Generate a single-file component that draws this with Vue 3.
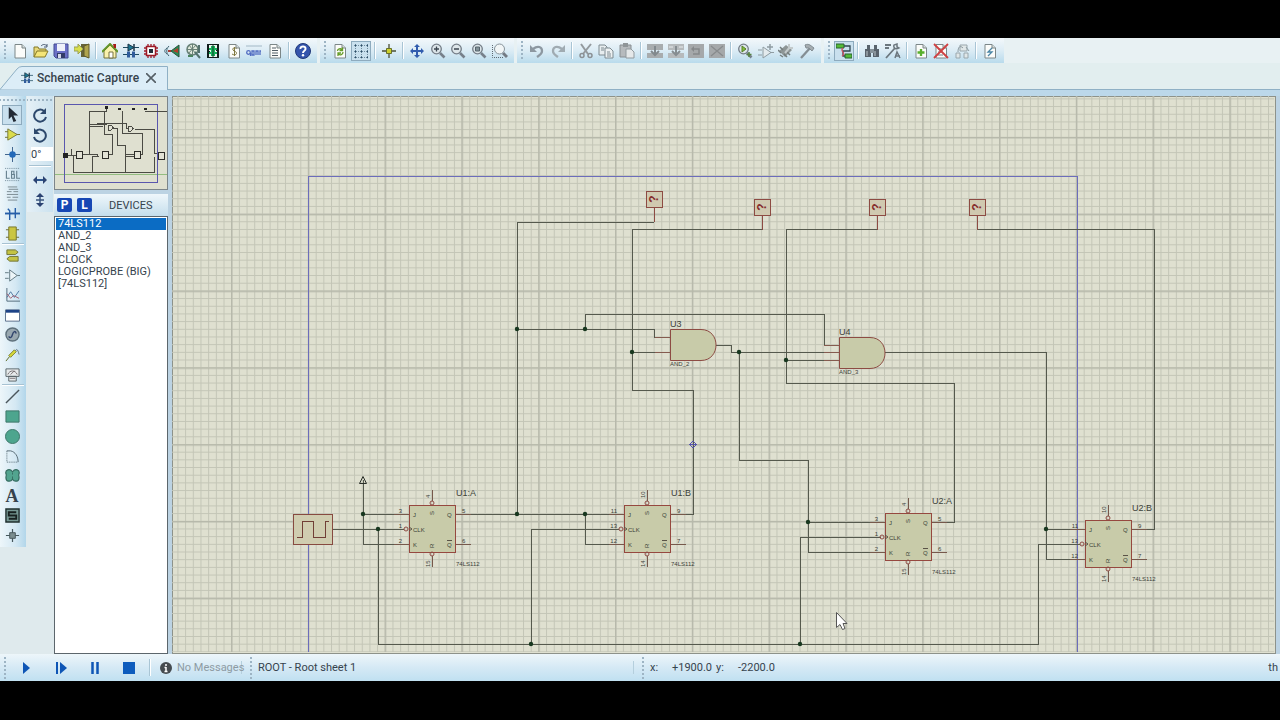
<script setup>
import { ref } from "vue";

const selected = ref("74LS112")
const angle = ref("0°")
const devices = ["74LS112", "AND_2", "AND_3", "CLOCK", "LOGICPROBE (BIG)", "[74LS112]"]

// toolbar groups, each one split in sections by a separator
const toolbars = [
    [["new", "open", "save", "exit"], ["home", "schematic", "chip", "view3d", "gerber", "explorer", "bill", "code", "notes"], ["help"]],
    [["redraw", "grid"], ["origin"], ["pan", "zoomIn", "zoomOut", "zoomAll", "zoomArea"]],
    [["undo", "redo"], ["cut", "copy", "paste"], ["blockCopy", "blockMove", "blockRotate", "blockDelete"], ["pick", "make", "packaging", "decompose"]],
    [["autoroute"], ["search", "property"], ["newSheet", "removeSheet", "exitSheet"], ["erc"]]
]
const pressed = ["grid", "autoroute", "select"]

const modes = [
    ["select", "component", "junction", "label", "script", "bus", "subcircuit"],
    ["terminal", "pin", "graph", "window", "generator", "probe", "instrument"],
    ["line", "box", "circle", "arc", "path", "text", "symbol", "marker"]
]

const page = '<path d="M3 1.500h7l3.500 3.500v10H3z" fill="#fbfcfa" stroke="#7c8788"/><path d="M10 1.500v3.500h3.500" fill="#d5dcdb" stroke="#7c8788"/>'
const lens = '<path d="M10 10l4.500 4.500" stroke="#77808b" stroke-width="2.600"/><circle cx="6.500" cy="6" r="4.800" fill="#dde6ea" stroke="#747d87" stroke-width="1.300"/>'
const parts = '<path d="M0 4.500h16M0 11.500h16" stroke="#1e4a60"/><path d="M5 1v7l6-3.500z" fill="#1c7894" stroke="#1b3547"/><path d="M11 1v7" stroke="#1b3547" stroke-width="1.500"/><path d="M4 8.500h3v6H4zM9 8.500h3v6H9z" fill="#305c9c"/>'
const greyBlock = '<path d="M0 1h16v14H0z" fill="#a5a8aa"/>'

const icons = {
    new: page,
    open: '<path d="M1 14V4h4l1 2h7v3" fill="#e7d87a" stroke="#847827"/><path d="M1 14l3-6h11l-3 6z" fill="#f4e578" stroke="#847827"/><path d="M8 3c2-2 4-2 6 0m0-2v3h-3" fill="none" stroke="#4a5b72"/>',
    save: '<path d="M1 1h14v14H3l-2-2z" fill="#6b70c6" stroke="#424b91"/><path d="M4 1h8v7H4z" fill="#eef1fa"/><path d="M4 10h8v5H4z" fill="#333c68"/><path d="M5 11h3v4H5z" fill="#d4d8e9"/>',
    exit: '<path d="M7 1h8v13H7z" fill="#65633a"/><path d="M10 3l5-2v14l-5-2z" fill="#afa44e" stroke="#5f592a"/><path d="M0 4h4V1l5 5-5 5V8H0z" fill="#d8df4c" stroke="#9aa054"/>',
    home: '<path d="M2 8v7h12V8L8 2z" fill="#faf2ad" stroke="#73713a"/><path d="M0 9l8-8 8 8" fill="none" stroke="#65952b" stroke-width="2"/><path d="M11 1h3v4h-2z" fill="#a61c19"/><path d="M7 9h4v6H7z" fill="#fff" stroke="#777341"/>',
    schematic: parts,
    chip: '<path d="M5 1v14M8 1v14M11 1v14M1 5h14M1 8h14M1 11h14" stroke="#a01c2b" stroke-width="1.300"/><path d="M3.500 3.500h9v9h-9z" fill="#fff" stroke="#9d1a26" stroke-width="1.500"/><path d="M6 6h4v4H6z" fill="#222c38"/>',
    view3d: '<path d="M15 2v12L7 8z" fill="#2b8d57" stroke="#29503a"/><path d="M14 5v5l-5-2z" fill="#b53b2a"/><path d="M5 3C2 6 2 10 5 13M3 5C0 7 0 9 3 11" fill="none" stroke="#3d6270"/><path d="M4 8h3" stroke="#a93b34" stroke-width="2"/>',
    gerber: '<circle cx="7.500" cy="6.500" r="5.500" fill="#e2ebdf" stroke="#678177" stroke-width="1.500"/><path d="M2 6.500h11M7.500 1v11M4 2l7 9M11 2L3 11" stroke="#6a8278"/><path d="M10 9l5 6M14 2v8" stroke="#52716d" stroke-width="2"/><path d="M3 13h5" stroke="#49835d" stroke-width="2"/>',
    explorer: '<path d="M2 1h12v14H2z" fill="#111e1c"/><path d="M4 2h8v4h-1v2h1v6H4v-3h1V8H4z" fill="#eaf5ee"/><path d="M6 3h4v2h2v2h-2v2h2v2h-2v2H6v-2H4V9h2V7H4V5h2z" fill="#16b25c"/><path d="M8 2v12" stroke="#113e28"/>',
    bill: page + '<path d="M10.500 5.500C8 4 6 5.500 7 7s4 1.500 3.500 3.500-3 1.500-4.500.500M8.500 4v9" fill="none" stroke="#817a42"/>',
    code: '<path d="M0 3h16" stroke="#a3b8c6"/><circle cx="2.500" cy="9.500" r="1.800" fill="none" stroke="#526dc2" stroke-width="1.300"/><path d="M4.500 10v3M6 8h2v4H6zM10 12V8h2v4M14 12V8h1" fill="none" stroke="#526dc2" stroke-width="1.300"/>',
    notes: page + '<path d="M5 5h4M5 7.500h6M5 10h6M5 12.500h6" stroke="#525e66"/>',
    help: '<circle cx="8" cy="8" r="7.500" fill="#3354ac" stroke="#203878"/><path d="M5.500 6C5 2.500 11 2.500 10.500 6 10.500 8 8 7.500 8 10" fill="none" stroke="#fff" stroke-width="2"/><circle cx="8" cy="12.300" r="1.200" fill="#fff"/>',
    redraw: page + '<path d="M5.500 8c0-2 3-3 4.500-1.500M10.500 4.500v3h-3M11 9c0 3-3 3.500-4.500 2M6 13v-3h3" fill="none" stroke="#669c28" stroke-width="1.300"/>',
    grid: '<path d="M1 2.500h14M1 8.500h14M1 14.500h14M2.500 1v14M8.500 1v14M14.500 1v14" stroke="#6f8b9d" stroke-dasharray="1 1"/><path d="M2 2.500h1m5 0h1m5 0h1M2 8.500h1m5 0h1m5 0h1M2 14.500h1m5 0h1m5 0h1" stroke="#2a4c68" stroke-width="1.500"/>',
    origin: '<path d="M8 1v14M1 8h14" stroke="#4c5136" stroke-width="1.300"/><path d="M5.500 5.500h5v5h-5z" fill="#ccd12c" stroke="#68702b"/>',
    pan: '<path d="M8 3v10M3 8h10" stroke="#315cae" stroke-width="2"/><path d="M8 1l3 3H5zM8 15l3-3H5zM1 8l3-3v6zM15 8l-3-3v6z" fill="#315cae"/>',
    zoomIn: lens + '<path d="M4 6h5M6.500 3.500v5" stroke="#3b4650" stroke-width="1.300"/>',
    zoomOut: lens + '<path d="M4 6h5" stroke="#3b4650" stroke-width="1.500"/>',
    zoomAll: lens + '<path d="M4.500 4h4v4h-4z" fill="#839299" stroke="#56646d"/>',
    zoomArea: '<path d="M.500 2v12.500H12" fill="none" stroke="#5e6971" stroke-dasharray="1 1"/><path d="M11 10l4 4" stroke="#737a83" stroke-width="3"/><circle cx="7.500" cy="6" r="5" fill="#f1f5f6" stroke="#88949b"/>',
    undo: '<path d="M4 6c5-4 9-2 9 2 0 3-2 4-5 6" fill="none" stroke="#8d98a1" stroke-width="2.300"/><path d="M1 2v7h7z" fill="#8d98a1"/>',
    redo: '<path d="M12 6C7 2 3 4 3 8c0 3 2 4 5 6" fill="none" stroke="#a0abb2" stroke-width="2.300"/><path d="M15 2v7H8z" fill="#a0abb2"/>',
    cut: '<path d="M3 1l7 10M13 1L5 11" stroke="#949a9e" stroke-width="2"/><circle cx="4" cy="12.500" r="2" fill="none" stroke="#8b9195" stroke-width="1.500"/><circle cx="12" cy="12.500" r="2" fill="none" stroke="#8b9195" stroke-width="1.500"/>',
    copy: '<path d="M1 2h6l2 2v8H1z" fill="#e7edef" stroke="#7f8b91"/><path d="M7 5h5l3 3v7H7z" fill="#edf1f2" stroke="#7f8b91"/><path d="M3 5h3M3 7h3M9 9h3M9 11h4M9 13h4" stroke="#7f8b91"/>',
    paste: '<path d="M1 2h11v12H1z" fill="#b6babd" stroke="#888e92"/><path d="M4 0h5v4H4z" fill="#8f9598"/><path d="M7 6h5l3 3v6H7z" fill="#e5e8e9" stroke="#929a9e"/>',
    blockCopy: '<path d="M0 1h16v6H0zM0 10h16v5H0z" fill="#a8acae"/><path d="M8 3v9M4 8l4 4 4-4" fill="none" stroke="#82898d" stroke-width="2"/>',
    blockMove: '<path d="M0 1h16v6H0zM0 10h16v5H0z" fill="#b6babc"/><path d="M8 3v9M4 8l4 4 4-4" fill="none" stroke="#868d91" stroke-width="2"/><path d="M1 4h4M11 4h4" stroke="#e9ecee"/>',
    blockRotate: greyBlock + '<path d="M5 6h6v5H5" fill="none" stroke="#85888a" stroke-width="1.500"/><path d="M6 3v6L3 6z" fill="#85888a"/>',
    blockDelete: greyBlock + '<path d="M2 3l12 10M14 3L2 13" stroke="#888b8d" stroke-width="1.300"/>',
    pick: lens + '<path d="M5 3v6l4-3z" fill="#85bd38" stroke="#54802b"/><path d="M12 9v5M9.500 11.500h5" stroke="#578340" stroke-width="1.500"/>',
    make: '<path d="M0 7h4M0 12h4M12 9.500h4M5 4v11l8-5.500z" fill="#e3eaed" stroke="#8f9ca2"/><path d="M12 1v6M9 4h6" stroke="#8f9ca2" stroke-width="1.500"/>',
    packaging: '<path d="M1 8l7-6 6 5-7 7z" fill="#8e9696"/><path d="M2 4l3 3M0 7l3 3M2 12l3 2M9 14l-3-3M12 12l-3-3" stroke="#757e7e" stroke-width="1.500"/><path d="M7 10l5-6M11 1v4h4" fill="none" stroke="#c3cacb" stroke-width="2"/>',
    decompose: '<path d="M2 15l9-10" stroke="#848e94" stroke-width="2.300"/><path d="M6 2c4-2 6 1 9 3l-2 3-3-3-3 0z" fill="#a5adb1" stroke="#818b91"/>',
    autoroute: '<path d="M0 1h8v4H0zM9 11h7v4H9z" fill="#56bb37" stroke="#286332"/><path d="M8 3h6v5H7v5h2" fill="none" stroke="#31454f" stroke-width="1.300"/><path d="M7 5c-4 3 4 5-1 8" fill="none" stroke="#cc5364" stroke-width="1.300"/>',
    search: '<path d="M3 2h3v4H3zM10 2h3v4h-3zM1 6h6v8H1zM9 6h6v8H9z" fill="#59636c"/><path d="M6 6h4v4H6z" fill="#87939a"/><path d="M3 8v5M11 8v5" stroke="#bcc7cb"/>',
    property: '<path d="M0 2h6M0 5h4M1 15l9-10" stroke="#6c777e" stroke-width="1.800"/><path d="M9 2c-1 3 2 5 5 3l-2-1V1zM10 15l2-6 3 6M10 13h5" fill="none" stroke="#6c777e" stroke-width="1.500"/>',
    newSheet: page + '<path d="M8 6v7M4.500 9.500h7" stroke="#58af2c" stroke-width="2.300"/>',
    removeSheet: page + '<path d="M5 6h5M5 9h5M5 12h5" stroke="#737b7e"/><path d="M1 1l14 14M15 1L1 15" stroke="#cf4143" stroke-width="1.800"/>',
    exitSheet: '<path d="M2 10h4v5H2zM10 10h4v5h-4zM6 2h7v6H6z" fill="#e0e7e8" stroke="#9aa7ac"/><path d="M4 9c0-5 2-7 5-4M12 4l3 4" fill="none" stroke="#8c9aa0"/>',
    erc: page + '<path d="M10 5L6 9h4l-4 4" fill="none" stroke="#4b86a6" stroke-width="1.300"/>',

    select: '<path d="M4 0v13l3-3 2 6 3-1-3-6h5z" fill="#222a35"/>',
    component: '<path d="M0 5h4M0 11h4M12 8h4" stroke="#6b6e2e"/><path d="M3 2v12l10-6z" fill="#dbdc4b" stroke="#75783b"/>',
    junction: '<path d="M8 0v16M0 8h16" stroke="#385d87"/><circle cx="8" cy="8" r="3.500" fill="#2369b8"/>',
    label: '<path d="M0 1.500h16M0 14.500h16" stroke="#738c9b" stroke-dasharray="1 1"/><path d="M1.500 4v8H5M7 4v8h3V8H7M7 4.500h2.500V8M12.500 4v8H16" fill="none" stroke="#67818f" stroke-width="1.200"/>',
    script: '<path d="M3 1h10M4 3.500h10M2 6h5M9 6h5M2 9h12M2 12h4M8 12h6M3 15h10" stroke="#77878e"/>',
    bus: '<path d="M0 8h16" stroke="#265ea8" stroke-width="2"/><path d="M5 15V5l-2-2M11 13V2" fill="none" stroke="#265ea8" stroke-width="1.500"/>',
    subcircuit: '<path d="M1 4h14M1 12h14" stroke="#67682e"/><path d="M4 1h8v14H4z" fill="#cac642" stroke="#75742e"/>',
    terminal: '<path d="M2 2h9l3 2.500L11 7H2zM14 9H5l-3 2.500L5 14h9z" fill="#c3c342" stroke="#6e7135"/>',
    pin: '<path d="M0 5h4M0 11h4M13 8h3M5 2v12l8-6z" fill="#edf5f8" stroke="#617781"/>',
    graph: '<path d="M2 0v14h14" fill="none" stroke="#506878"/><path d="M2 10l4-6 4 6 5-7" fill="none" stroke="#4d76a0"/><path d="M2 6l4 5 3-3 6 3" fill="none" stroke="#a45e6f"/>',
    window: '<path d="M.500 2h15v12H.500z" fill="#fff" stroke="#556b87"/><path d="M1 2h14v3H1z" fill="#1d4387"/>',
    generator: '<circle cx="8" cy="8" r="7" fill="#9aa8b0" stroke="#5e707b" stroke-width="1.500"/><path d="M4 10c1 2 3 2 4-2s3-4 4-1" fill="none" stroke="#32456d" stroke-width="1.500"/>',
    probe: '<path d="M1 15l4-5" stroke="#59651d"/><path d="M4 9l6-6 2 2-6 6z" fill="#d6d83a" stroke="#7d8132"/><path d="M11 4c2-3 3 0 4 4" fill="none" stroke="#5f7180"/>',
    instrument: '<path d="M1 2h14v8H1zM4 10h8v5H4z" fill="#e6eaeb" stroke="#596367"/><path d="M3 8c2-5 8-5 10 0M6 8l4-4M5 12h6" fill="none" stroke="#746d70"/>',
    line: '<path d="M1 15L15 1" stroke="#4b565c" stroke-width="1.500"/>',
    box: '<path d="M1 2h14v12H1z" fill="#4da58e" stroke="#3d7468"/>',
    circle: '<circle cx="8" cy="8" r="7.500" fill="#4da58e" stroke="#3d7468"/>',
    arc: '<path d="M2 2h4c5 1 8 6 8 12" fill="none" stroke="#536671"/><path d="M2 2v12h12" fill="none" stroke="#536671" stroke-dasharray="1 1"/>',
    path: '<path d="M8 4C5 0 0 2 1 6c1 2 0 2 0 4 0 5 5 5 7 2 2 3 7 3 7-2 0-2-1-2 0-4 1-4-4-6-7-2z" fill="#52a48f" stroke="#366d61" stroke-width="1.300"/><path d="M8 5v2M8 9v3" stroke="#366d61"/>',
    symbol: '<path d="M1 1h14v14H1z" fill="#769793" stroke="#20302f" stroke-width="1.500"/><path d="M12 4.500H4V8h8v3.500H4" fill="none" stroke="#17201f" stroke-width="2"/>',
    marker: '<path d="M8 1v14M1 8h14" stroke="#46585d" stroke-width="1.300"/><path d="M5 5h6v6H5z" fill="#7b8d8f" stroke="#47575b"/>',

    turnCw: '<path d="M12 4a6 6 0 1 0 2 6" fill="none" stroke="#2d496d" stroke-width="2"/><path d="M14 1v6H8z" fill="#2d496d"/>',
    turnCcw: '<path d="M4 4a6 6 0 1 1-2 6" fill="none" stroke="#2d496d" stroke-width="2"/><path d="M2 1v6h6z" fill="#2d496d"/>',
    mirrorX: '<path d="M3 8h10" stroke="#2e568e" stroke-width="2"/><path d="M1 8l4-4v8zM15 8l-4-4v8z" fill="#2b4372"/>',
    mirrorY: '<path d="M8 3v10M4 8h8" stroke="#39547d" stroke-width="1.500"/><path d="M8 1l4 4H4zM8 15l4-4H4z" fill="#2b4372"/>',

    play: '<path d="M4 2v12l7-6z" fill="#0e55b5"/>',
    step: '<path d="M4 2v12" stroke="#0e55b5" stroke-width="2"/><path d="M7 2v12l7-6z" fill="#0e55b5"/>',
    pause: '<path d="M5.500 2v12M10.500 2v12" stroke="#0e55b5" stroke-width="2.500"/>',
    stop: '<path d="M2 2h12v12H2z" fill="#0e5cbd"/>'
}

const sectionSize = (names, pitch) => Math.floor(names.length * pitch) + "px"

// schematic
const wires = [
    "654 222 517 222 517 514",
    "762 229 632 229 632 390 693 390 693 514 683 514",
    "877 229 786 229 786 383 954 383 954 522 944 522",
    "977 229 1154 229 1154 529 1145 529",
    "517 329 654 329 654 337 670 337",
    "585 329 585 314 824 314 824 345 839 345",
    "632 352 670 352",
    "716 345 731 345 731 352 839 352",
    "739 352 739 460 808 460 808 552 885 552",
    "808 522 885 522",
    "786 360 839 360",
    "885 352 1046 352 1046 559 1084 559",
    "1046 529 1084 529",
    "332 529 404 529",
    "363 480 363 544 409 544",
    "363 514 409 514",
    "378 529 378 644 1038 644 1038 544 1080 544",
    "455 514 623 514",
    "585 514 585 544 623 544",
    "531 644 531 529 619 529",
    "800 644 800 537 881 537"
]
const dots = [
    [363, 514], [378, 529], [517, 329], [585, 329], [517, 514], [585, 514], [632, 352],
    [739, 352], [786, 360], [808, 522], [1046, 529], [531, 644], [800, 644]
]
const probes = [[654, 199], [762, 207], [877, 207], [977, 207]]
const gates = [
    { name: "U3", type: "AND_2", x: 670, y: 329, pins: [8, 23] },
    { name: "U4", type: "AND_3", x: 839, y: 337, pins: [8, 15, 23] }
]
const flipflops = [
    { name: "U1:A", x: 409, y: 505, pins: [3, 1, 2, 5, 6, 4, 15] },
    { name: "U1:B", x: 624, y: 505, pins: [11, 13, 12, 9, 7, 10, 14] },
    { name: "U2:A", x: 885, y: 513, pins: [3, 1, 2, 5, 6, 4, 15] },
    { name: "U2:B", x: 1085, y: 520, pins: [11, 13, 12, 9, 7, 10, 14] }
]
</script>


<template>
    <div class="screen">
        <!-- Toolbars -->
        <header class="toolbars">
            <div v-for="(group, g) in toolbars" :key="g" class="toolbar">
                <span class="grip"></span>
                <template v-for="(section, s) in group" :key="s">
                    <span v-if="s > 0" class="separator"></span>
                    <div class="section" :style="{ width: sectionSize(section, 20.6) }">
                        <button v-for="name in section" :key="name" class="tool" :class="{ pressed: pressed.includes(name) }" :aria-label="name">
                            <svg class="icon" viewBox="0 0 16 16" fill="none" v-html="icons[name]"></svg>
                        </button>
                    </div>
                </template>
            </div>
        </header>

        <!-- Tabs -->
        <nav class="tabs">
            <div class="tab">
                <svg class="tab-shape" viewBox="0 0 168 24" preserveAspectRatio="none">
                    <path d="M0 23.500L17 3q2-2.500 5-2.500h145.500V24" fill="#dcedf7" stroke="#8fb0c5" />
                </svg>
                <svg class="tab-icon" viewBox="0 0 16 16" v-html="icons.schematic"></svg>
                <span class="tab-title">Schematic Capture</span>
                <button class="tab-close" aria-label="Close">
                    <svg viewBox="0 0 10 10"><path d="M0 0l10 10M10 0L0 10" stroke="#555f66" stroke-width="1.600" /></svg>
                </button>
            </div>
        </nav>

        <main class="workspace">
            <aside class="modes">
                <span class="grip-top"></span>
                <template v-for="(section, s) in modes" :key="s">
                    <span v-if="s > 0" class="line"></span>
                    <div class="mode-section" :style="{ height: sectionSize(section, 19.8) }">
                        <button v-for="name in section" :key="name" class="mode" :class="{ pressed: pressed.includes(name) }" :aria-label="name">
                            <b v-if="name === 'text'" class="letter">A</b>
                            <svg v-else class="mode-icon" viewBox="0 0 16 16" fill="none" v-html="icons[name]"></svg>
                        </button>
                    </div>
                </template>
            </aside>

            <div class="rotation-column">
                <aside class="rotation">
                    <span class="grip-top"></span>
                    <button class="turn" aria-label="Rotate clockwise"><svg class="icon" viewBox="0 0 16 16" v-html="icons.turnCw"></svg></button>
                    <button class="turn" aria-label="Rotate anti-clockwise"><svg class="icon" viewBox="0 0 16 16" v-html="icons.turnCcw"></svg></button>
                    <input v-model="angle" class="angle" type="text" aria-label="Angle">
                    <span class="line spaced"></span>
                    <button class="turn" aria-label="X mirror"><svg class="icon" viewBox="0 0 16 16" v-html="icons.mirrorX"></svg></button>
                    <button class="turn" aria-label="Y mirror"><svg class="icon" viewBox="0 0 16 16" v-html="icons.mirrorY"></svg></button>
                </aside>
            </div>

            <section class="side">
                <svg class="preview" viewBox="0 0 112 92" fill="none" shape-rendering="crispEdges">
                    <path d="M0 77h112" stroke="#93bd80" />
                    <path d="M9 7h93v78H9z" stroke="#5a57ae" />
                    <path d="M51 12V14H34V57M49 14V37h8V57H51M67 14V36h20V57H80M34 27h18M42 28V26h29V31H73M34 29h14M56 31h6V48h8V60M80 32h19V56H102M90 14h22M13 58h8M16 52v6M27 57h16M18 59v16H99V60M37 75V59h7M70 75V59h9M42 57v3M70 57h9" stroke="#4b4b44" />
                    <path d="M21 54h6v7h-6zM47 54h6v7h-6zM79 54h6v7h-6zM103 55h6v7h-6z" stroke="#2d2d28" fill="#e3e3d5" />
                    <path d="M53 28h3q4 2.500 0 5h-3zM73 29h3q4 2.500 0 5h-3z" stroke="#4b4b44" fill="#e3e3d5" />
                    <path d="M8 56h4v4H8zM50 9h2v2h-2zM63 11h2v1h-2zM77 11h2v1h-2zM89 11h2v1h-2z" fill="#222" stroke="#222" />
                </svg>
                <div class="panel-head">
                    <button class="flag">P</button>
                    <button class="flag">L</button>
                    <span class="panel-title">DEVICES</span>
                </div>
                <ul class="devices">
                    <li v-for="device in devices" :key="device">
                        <button class="device" :class="{ chosen: device === selected }" @click="selected = device">{{ device }}</button>
                    </li>
                </ul>
            </section>

            <section class="sheet">
                <svg class="drawing" fill="none">
                    <defs>
                        <pattern id="minor" x="59.200" y="40.800" width="7.680" height="7.680" patternUnits="userSpaceOnUse">
                            <path d="M0 .500H7.680M.500 0V7.680" stroke="#c3c5b6" />
                        </pattern>
                        <pattern id="major" x="59" y="41" width="76.800" height="76.800" patternUnits="userSpaceOnUse">
                            <path d="M0 .500H76.800M.500 0V76.800" stroke="#b7b9ab" stroke-width="2" />
                        </pattern>
                    </defs>
                    <rect width="100%" height="100%" fill="url(#minor)" />
                    <rect width="100%" height="100%" fill="url(#major)" />

                    <g transform="translate(-172 -96)">
                        <path class="crisp" d="M308.500 900V176.500H1077.500V900" stroke="#6c6dbb" />
                        <polyline v-for="w in wires" :key="w" class="crisp" :points="w" stroke="#55594d" />
                        <path d="M359.500 483.500l3.500-7 3.500 7z" stroke="#292e28" />

                        <!-- Clock source -->
                        <path class="crisp" d="M293 514h39v30h-39z" fill="#d0cdb0" stroke="#874a40" />
                        <path class="crisp" d="M297 537h5v-16h11v16h12v-16h4" stroke="#713f36" />

                        <g v-for="p in probes" :key="p[0]" :transform="`translate(${p[0]} ${p[1]})`">
                            <path class="crisp" d="M0 8v15" stroke="#8d4b43" />
                            <path class="crisp" d="M-8-8H8V8H-8z" fill="#d0c9b0" stroke="#8d4b43" />
                            <text class="mark" transform="rotate(-90)" x="0" y="4">?</text>
                        </g>

                        <g v-for="gate in gates" :key="gate.name" :transform="`translate(${gate.x} ${gate.y})`">
                            <path v-for="y in gate.pins" :key="y" class="crisp" :d="`M-15 ${y}H0`" stroke="#855b4f" />
                            <path d="M.500 .500H31C51 .500 51 31.500 31 31.500H.500z" fill="#c8cba9" stroke="#8d4b43" />
                            <text class="name" x="0" y="-2">{{ gate.name }}</text>
                            <text class="type" x="0" y="37">{{ gate.type }}</text>
                        </g>

                        <g v-for="ff in flipflops" :key="ff.name" :transform="`translate(${ff.x} ${ff.y})`">
                            <path class="crisp" d="M-15 9H0M-15 39H0M46 9H62M46 39H62M23-15V-4M23 51V62" stroke="#76584b" />
                            <path class="crisp" d="M0 0H46V47H0z" fill="#c8cba9" stroke="#96483f" />
                            <circle cx="-3" cy="24" r="2" stroke="#8d4b43" />
                            <circle cx="23" cy="-2" r="2" stroke="#8d4b43" />
                            <circle cx="23" cy="49" r="2" stroke="#8d4b43" />
                            <path d="M0 22l3 2-3 2M38 35.500h5" stroke="#5a5347" />
                            <text class="pin" x="4" y="12">J</text>
                            <text class="pin" x="4" y="27">CLK</text>
                            <text class="pin" x="4" y="42">K</text>
                            <text class="pin" x="38" y="12">Q</text>
                            <text class="pin" x="38" y="42">Q</text>
                            <text class="pin" transform="translate(25 10) rotate(-90)">S</text>
                            <text class="pin" transform="translate(25 43) rotate(-90)">R</text>
                            <text class="pin end" x="-7" y="8">{{ ff.pins[0] }}</text>
                            <text class="pin end" x="-7" y="23">{{ ff.pins[1] }}</text>
                            <text class="pin end" x="-7" y="38">{{ ff.pins[2] }}</text>
                            <text class="pin" x="53" y="8">{{ ff.pins[3] }}</text>
                            <text class="pin" x="53" y="38">{{ ff.pins[4] }}</text>
                            <text class="pin" transform="translate(21 -7) rotate(-90)">{{ ff.pins[5] }}</text>
                            <text class="pin" transform="translate(21 62) rotate(-90)">{{ ff.pins[6] }}</text>
                            <text class="name" x="47" y="-9">{{ ff.name }}</text>
                            <text class="type" x="47" y="61">74LS112</text>
                        </g>

                        <circle v-for="d in dots" :key="d.join()" :cx="d[0]" :cy="d[1]" r="2.200" fill="#18381f" />
                        <path d="M693 441l3.500 3.500-3.500 3.500-3.500-3.500zM689 444.500h8" stroke="#5553ad" />

                        <!-- Mouse pointer -->
                        <path d="M836.500 612.500v15l3.500-3 2.500 5 2.500-1-2-5h4z" fill="#fff" stroke="#555" />
                    </g>
                </svg>
            </section>
        </main>

        <!-- Status bar -->
        <footer class="status">
            <span class="grip"></span>
            <div class="simulation">
                <button v-for="name in ['play', 'step', 'pause', 'stop']" :key="name" class="run" :aria-label="name">
                    <svg class="icon" viewBox="0 0 16 16" v-html="icons[name]"></svg>
                </button>
            </div>
            <span class="separator"></span>
            <div class="messages">
                <svg class="info" viewBox="0 0 12 12">
                    <circle cx="6" cy="6" r="6" fill="#454b50" />
                    <path d="M6 2v2M6 5v5M4.500 9.500h3M4.500 5.500H6" stroke="#fff" stroke-width="1.500" />
                </svg>
                <span>No Messages</span>
            </div>
            <span class="grip"></span>
            <span class="sheet-name">ROOT - Root sheet 1</span>
            <span class="grip"></span>
            <div class="coords">
                <span class="axis">x:</span>
                <span class="value">+1900.0</span>
                <span class="axis">y:</span>
                <span class="value">-2200.0</span>
            </div>
            <span class="unit">th</span>
        </footer>
    </div>
</template>


<style>
body {
    margin: 0;
    background: #000;
}
</style>

<style scoped>
* {
    box-sizing: border-box;
}

button {
    border: 0;
    padding: 0;
    background: none;
    font: inherit;
    color: inherit;
}

svg {
    display: block;
}

.screen {
    display: flex;
    flex-direction: column;
    min-height: 100vh;
    padding: 38px 0 39px;
    background: #000;
    color: #36434d;
    font-family: Roboto, "Liberation Sans", sans-serif;
    font-size: 11px;
}

.toolbars {
    display: flex;
    gap: 3px;
    height: 25px;
    background: #e8f1f3;
}

.toolbar {
    display: flex;
    align-items: center;
    padding-right: 4px;
    background: linear-gradient(#f3f8fb, #dcecf5 50%, #b9dbec);
}

.grip {
    flex: none;
    align-self: stretch;
    width: 10px;
    margin: 2px 0;
    background: radial-gradient(circle, #9db4c4 1px, transparent 1px) 3px 0 / 4px 4px repeat-y;
}

.separator {
    flex: none;
    width: 8px;
    height: 17px;
    background: linear-gradient(90deg, transparent 3px, #a9c5d5 3px, #a9c5d5 4px, #fff 4px, #fff 5px, transparent 5px);
}

.section {
    display: flex;
}

.tool {
    display: flex;
    flex: 1;
    align-items: center;
    justify-content: center;
    height: 20px;
}

.icon {
    width: 16px;
    height: 16px;
}

.pressed {
    background: #c9e0ee;
    outline: 1px solid #8eabbe;
    outline-offset: -1px;
}

.tabs {
    display: flex;
    align-items: flex-end;
    height: 33px;
    padding-bottom: 6px;
    background: linear-gradient(#e2eeef 26px, #8fb0c5 26px, #8fb0c5 27px, #bcd8ea 27px);
}

.tab {
    position: relative;
    display: flex;
    align-items: center;
    width: 168px;
    height: 24px;
    padding-left: 21px;
}

.tab-shape {
    position: absolute;
    inset: 0;
    width: 100%;
    height: 100%;
}

.tab-icon {
    position: relative;
    width: 12px;
    height: 14px;
}

.tab-title {
    position: relative;
    margin-left: 4px;
    font-size: 12px;
    font-weight: 500;
}

.tab-close {
    position: relative;
    margin-left: 7px;
}

.tab-close svg {
    width: 10px;
    height: 10px;
}

.workspace {
    display: flex;
    flex: 1;
    background: linear-gradient(90deg, #dfeaed 54px, #bcd3e3 54px);
}

.modes,
.rotation {
    display: flex;
    flex-direction: column;
    width: 26px;
    background: linear-gradient(90deg, #edf6fa, #d4e8f3 60%, #b2d6ea);
}

.modes {
    align-self: flex-start;
    padding-bottom: 2px;
}

.rotation-column {
    width: 28px;
    padding-left: 1px;
}

.rotation {
    align-items: center;
    padding-bottom: 2px;
    background: linear-gradient(90deg, #e5f0f6, #cbe2ef);
}

.grip-top {
    align-self: stretch;
    height: 9px;
    background: radial-gradient(circle, #9db4c4 1px, transparent 1px) 2px 2px / 4px 4px repeat-x;
}

.mode-section {
    display: flex;
    flex-direction: column;
}

.mode {
    display: flex;
    flex: 1;
    align-items: center;
    justify-content: center;
    width: 20px;
    margin-left: 2px;
}

.mode-icon {
    width: 15px;
    height: 15px;
}

.letter {
    font-family: "Liberation Serif", serif;
    font-size: 18px;
    line-height: 18px;
}

.line {
    align-self: stretch;
    height: 3px;
    margin: 0 2px;
    background: linear-gradient(#a7c2d2 1px, #fff 1px, #fff 2px, transparent 2px);
}

.spaced {
    margin: 4px 2px 2px;
}

.turn {
    display: flex;
    align-items: center;
    justify-content: center;
    height: 20px;
}

.angle {
    width: 22px;
    height: 14px;
    margin: 2px 0 0 4px;
    padding: 0;
    border: 0;
    background: #fff;
    color: #36434d;
    font: 11px Roboto, sans-serif;
}

.side {
    display: flex;
    flex-direction: column;
    width: 114px;
}

.preview {
    width: 114px;
    height: 94px;
    border: 1px solid #7c858a;
    background: #dfe0d0;
}

.panel-head {
    display: flex;
    align-items: center;
    gap: 5px;
    height: 22px;
    margin-top: 4px;
    padding-left: 3px;
    background: linear-gradient(#eff7fb, #c5deec);
}

.flag {
    width: 15px;
    height: 14px;
    border-radius: 2px;
    background: #1747b4;
    color: #fff;
    font-size: 12px;
    font-weight: 700;
    line-height: 14px;
    text-align: center;
}

.panel-title {
    margin-left: 12px;
}

.devices {
    flex: 1;
    margin: 0;
    padding: 1px;
    border: 1px solid #5c666c;
    background: #fff;
    list-style: none;
}

.device {
    display: block;
    width: 100%;
    height: 12px;
    padding-left: 2px;
    line-height: 12px;
    text-align: left;
    white-space: nowrap;
}

.chosen {
    background: #0b6cc4;
    color: #fff;
}

.sheet {
    position: relative;
    flex: 1;
    min-width: 0;
    margin: 0 4px;
    border: 1px solid #8d928a;
    background: #dfe0d0;
}

.drawing {
    position: absolute;
    inset: -1px 0 0 -1px;
    width: 100%;
    height: 100%;
}

.crisp {
    shape-rendering: crispEdges;
}

.drawing text {
    fill: #3b3f38;
    font-family: "Liberation Sans", sans-serif;
}

.drawing .name {
    font-size: 9px;
}

.drawing .type,
.drawing .pin {
    font-size: 6px;
}

.drawing .end {
    text-anchor: end;
}

.drawing .mark {
    fill: #852b2b;
    font-size: 12px;
    font-weight: 700;
    text-anchor: middle;
}

.status {
    display: flex;
    align-items: center;
    height: 27px;
    background: linear-gradient(#edf6fa, #d5e9f5 50%, #c0e0f1);
}

.simulation {
    display: flex;
}

.run {
    display: flex;
    align-items: center;
    justify-content: center;
    width: 34px;
    height: 22px;
}

.messages {
    display: flex;
    align-items: center;
    gap: 5px;
    width: 82px;
    margin: 0 4px 0 6px;
    border-right: 1px solid #b5cfdd;
    color: #8e9ba3;
    white-space: nowrap;
}

.info {
    flex: none;
    width: 12px;
    height: 12px;
}

.sheet-name {
    width: 376px;
    margin: 0 4px 0 2px;
    border-right: 1px solid #b5cfdd;
}

.coords {
    display: flex;
    margin-left: 2px;
}

.axis {
    width: 22px;
}

.value {
    width: 44px;
}

.unit {
    margin-left: auto;
    padding-right: 2px;
}
</style>
